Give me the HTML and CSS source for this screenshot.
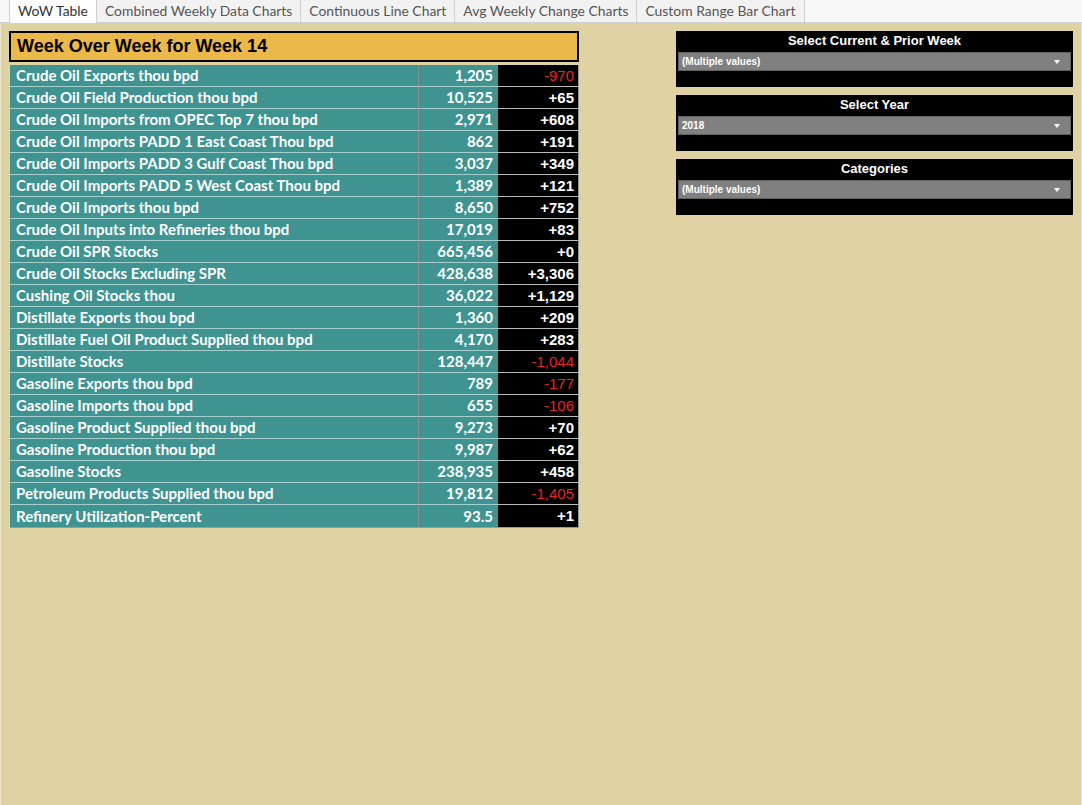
FILE: index.html
```html
<!DOCTYPE html>
<html>
<head>
<meta charset="utf-8">
<link rel="stylesheet" href="styles.css">
</head>
<body>
<div class="tabs">
  <div class="tab active">WoW Table</div>
  <div class="tab">Combined Weekly Data Charts</div>
  <div class="tab">Continuous Line Chart</div>
  <div class="tab">Avg Weekly Change Charts</div>
  <div class="tab">Custom Range Bar Chart</div>
</div>
<div class="dash">
  <div class="left">
    <div class="title">Week Over Week for Week 14</div>
    <div class="table">
      <div class="row"><div class="lbl">Crude Oil Exports thou bpd</div><div class="val">1,205</div><div class="chg neg">-970</div></div>
      <div class="row"><div class="lbl">Crude Oil Field Production thou bpd</div><div class="val">10,525</div><div class="chg">+65</div></div>
      <div class="row"><div class="lbl">Crude Oil Imports from OPEC Top 7 thou bpd</div><div class="val">2,971</div><div class="chg">+608</div></div>
      <div class="row"><div class="lbl">Crude Oil Imports PADD 1 East Coast Thou bpd</div><div class="val">862</div><div class="chg">+191</div></div>
      <div class="row"><div class="lbl">Crude Oil Imports PADD 3 Gulf Coast Thou bpd</div><div class="val">3,037</div><div class="chg">+349</div></div>
      <div class="row"><div class="lbl">Crude Oil Imports PADD 5 West Coast Thou bpd</div><div class="val">1,389</div><div class="chg">+121</div></div>
      <div class="row"><div class="lbl">Crude Oil Imports thou bpd</div><div class="val">8,650</div><div class="chg">+752</div></div>
      <div class="row"><div class="lbl">Crude Oil Inputs into Refineries thou bpd</div><div class="val">17,019</div><div class="chg">+83</div></div>
      <div class="row"><div class="lbl">Crude Oil SPR Stocks</div><div class="val">665,456</div><div class="chg">+0</div></div>
      <div class="row"><div class="lbl">Crude Oil Stocks Excluding SPR</div><div class="val">428,638</div><div class="chg">+3,306</div></div>
      <div class="row"><div class="lbl">Cushing Oil Stocks thou</div><div class="val">36,022</div><div class="chg">+1,129</div></div>
      <div class="row"><div class="lbl">Distillate Exports thou bpd</div><div class="val">1,360</div><div class="chg">+209</div></div>
      <div class="row"><div class="lbl">Distillate Fuel Oil Product Supplied thou bpd</div><div class="val">4,170</div><div class="chg">+283</div></div>
      <div class="row"><div class="lbl">Distillate Stocks</div><div class="val">128,447</div><div class="chg neg">-1,044</div></div>
      <div class="row"><div class="lbl">Gasoline Exports thou bpd</div><div class="val">789</div><div class="chg neg">-177</div></div>
      <div class="row"><div class="lbl">Gasoline Imports thou bpd</div><div class="val">655</div><div class="chg neg">-106</div></div>
      <div class="row"><div class="lbl">Gasoline Product Supplied thou bpd</div><div class="val">9,273</div><div class="chg">+70</div></div>
      <div class="row"><div class="lbl">Gasoline Production thou bpd</div><div class="val">9,987</div><div class="chg">+62</div></div>
      <div class="row"><div class="lbl">Gasoline Stocks</div><div class="val">238,935</div><div class="chg">+458</div></div>
      <div class="row"><div class="lbl">Petroleum Products Supplied thou bpd</div><div class="val">19,812</div><div class="chg neg">-1,405</div></div>
      <div class="row"><div class="lbl">Refinery Utilization-Percent</div><div class="val">93.5</div><div class="chg">+1</div></div>
    </div>
  </div>
  <div class="right">
    <div class="filter">
      <div class="ftitle">Select Current &amp; Prior Week</div>
      <div class="dd"><span>(Multiple values)</span><span class="arrow"></span></div>
    </div>
    <div class="filter">
      <div class="ftitle">Select Year</div>
      <div class="dd"><span>2018</span><span class="arrow"></span></div>
    </div>
    <div class="filter">
      <div class="ftitle">Categories</div>
      <div class="dd"><span>(Multiple values)</span><span class="arrow"></span></div>
    </div>
  </div>
</div>
</body>
</html>
```
FILE: styles.css
```css
html, body {
  margin: 0;
  padding: 0;
  height: 100%;
}
body {
  width: 1082px;
  height: 805px;
  display: flex;
  flex-direction: column;
  background: #dfd2a3;
  font-family: "Liberation Sans", Arial, sans-serif;
  overflow: hidden;
}
.tabs {
  display: flex;
  height: 22px;
  background: #f8f8f8;
  border-bottom: 1px solid #cfcfcf;
  padding-left: 9px;
  flex: none;
}
.tab {
  font-family: "Lato", sans-serif;
  font-size: 13.9px;
  color: #555;
  padding: 0 8px;
  line-height: 22px;
  border-right: 1px solid #cfcfcf;
  background: #f2f2f2;
}
.tab.active {
  background: #fff;
  color: #333;
  border-left: 1px solid #cfcfcf;
  height: 23px;
}
.dash {
  flex: 1;
  display: flex;
  padding: 8px 0 0 8px;
  border-left: 1px solid #eee8d0;
  border-right: 1px solid #eee8d0;
}
.left {
  width: 570px;
}
.title {
  height: 27px;
  border: 2px solid #000;
  background: #ebb84a;
  font-weight: bold;
  font-size: 18px;
  line-height: 27px;
  padding-left: 6px;
  color: #000;
}
.table {
  margin-top: 3px;
  margin-left: 1px;
  width: 568px;
  border-right: 1px solid #999;
  border-bottom: 1px solid #999;
  box-sizing: content-box;
}
.row {
  display: flex;
  height: 22px;
}
.lbl, .val {
  background: #3f9390;
  color: #fff;
  border-bottom: 1px solid #a5cfcb;
  font-family: "Lato", sans-serif;
  font-weight: bold;
  font-size: 15px;
  line-height: 21px;
}
.lbl {
  width: 402px;
  padding-left: 6px;
  border-right: 1px solid #8e8e8e;
}
.val {
  width: 74px;
  padding-right: 5px;
  text-align: right;
}
.chg {
  width: 76px;
  padding-right: 4px;
  background: #000;
  color: #fff;
  text-align: right;
  font-weight: bold;
  font-size: 15px;
  line-height: 21px;
  border-bottom: 1px solid #bbb;
}
.chg.neg {
  color: #e8261f;
  font-weight: normal;
}
.row:last-child .lbl, .row:last-child .val, .row:last-child .chg {
  border-bottom: none;
  line-height: 22px;
}
.right {
  margin-left: 97px;
  width: 397px;
  display: flex;
  flex-direction: column;
  gap: 8px;
}
.filter {
  background: #000;
  height: 56px;
  padding: 0 2px;
  box-sizing: border-box;
}
.ftitle {
  color: #fff;
  font-weight: bold;
  font-size: 13px;
  text-align: center;
  line-height: 19px;
}
.dd {
  margin-top: 2px;
  height: 19px;
  background: #808080;
  border: 1px solid #606060;
  box-sizing: border-box;
  display: flex;
  align-items: center;
  justify-content: space-between;
  padding: 0 10px 0 3px;
  color: #fff;
  font-weight: bold;
  font-size: 10px;
}
.arrow {
  width: 0;
  height: 0;
  border-left: 3px solid transparent;
  border-right: 3px solid transparent;
  border-top: 4px solid #fff;
}
```
